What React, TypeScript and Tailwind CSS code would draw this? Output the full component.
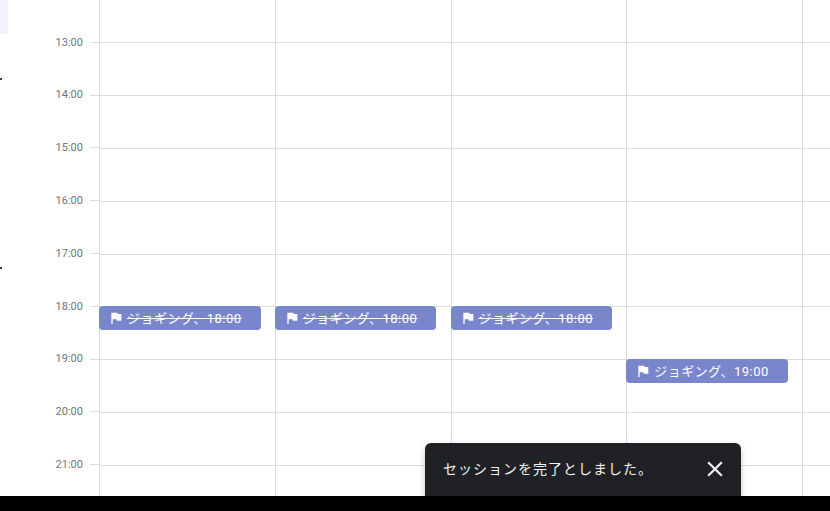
const hours = ["13:00", "14:00", "15:00", "16:00", "17:00", "18:00", "19:00", "20:00", "21:00"];

const days = [
  { event: "18:00", done: true },
  { event: "18:00", done: true },
  { event: "18:00", done: true },
  { event: "19:00", done: false },
  { event: null, done: false },
];

function FlagIcon() {
  return (
    <svg viewBox="0 0 24 24" className="w-4 h-4 shrink-0 fill-white">
      <path d="M14.4 6L14 4H5v17h2v-7h5.6l.4 2h7V6z" />
    </svg>
  );
}

function EventChip({ time, done }: { time: string; done: boolean }) {
  return (
    <div className="absolute -top-px -left-px z-10 flex items-center w-[161.6px] h-6 pl-[9px] gap-[3px] rounded bg-[#7986cb] text-white text-[13px] tracking-[0.45px]">
      <FlagIcon />
      <span className={done ? "pt-px line-through" : "pt-px"}>ジョギング、{time}</span>
    </div>
  );
}

function DayColumn({ event, done }: { event: string | null; done: boolean }) {
  return (
    <div className="flex flex-col w-[175.75px] shrink-0 border-l border-[#dadce0]">
      <div className="h-[43.4px] shrink-0 border-b border-[#dadce0]" />
      {hours.map((hour) => (
        <div key={hour} className="relative h-[52.8px] shrink-0 border-b border-[#dadce0]">
          {event === hour && <EventChip time={hour} done={done} />}
        </div>
      ))}
    </div>
  );
}

export default function App() {
  return (
    <div
      className="flex flex-col h-[511px] w-[830px] overflow-hidden bg-black"
      style={{ fontFamily: 'Roboto, "Noto Sans CJK JP", sans-serif' }}
    >
      <div className="relative flex h-[496px] shrink-0 overflow-hidden bg-white">
        {/* clipped sidebar */}
        <div className="absolute top-0 left-0 w-2 h-[34px] rounded-br bg-[#f1f3f8]" />
        <div className="absolute top-[78px] left-0 w-[2px] h-[2px] bg-[#3c4043]" />
        <div className="absolute top-[267px] left-0 w-[2px] h-[2px] bg-[#3c4043]" />

        <div className="flex flex-col w-[99px] shrink-0 pt-[16px]">
          {hours.map((hour) => (
            <div key={hour} className="flex items-center h-[52.8px] shrink-0">
              <span className="w-[83px] pt-px text-right text-[11px] text-[#70757a]">{hour}</span>
              <div className="ml-[7px] w-[9px] h-px bg-[#dadce0]" />
            </div>
          ))}
        </div>

        <div className="flex flex-1 min-w-0">
          {days.map((day, i) => (
            <DayColumn key={i} event={day.event} done={day.done} />
          ))}
        </div>

        <div className="absolute left-[425px] top-[443px] z-20 flex items-start justify-between w-[316px] h-[60px] pl-[18px] pr-[13px] pt-[17px] rounded-md bg-[#202124] text-white shadow-[0_3px_6px_rgba(60,64,67,0.3)]">
          <span className="text-[14px] leading-[18px] tracking-[1px] text-[#f1f3f4]">セッションを完了としました。</span>
          <svg viewBox="0 0 24 24" className="w-[26px] h-[26px] -mt-[4px] fill-[#f1f3f4]">
            <path d="M19 6.41L17.59 5 12 10.59 6.41 5 5 6.41 10.59 12 5 17.59 6.41 19 12 13.41 17.59 19 19 17.59 13.41 12z" />
          </svg>
        </div>
      </div>
    </div>
  );
}
